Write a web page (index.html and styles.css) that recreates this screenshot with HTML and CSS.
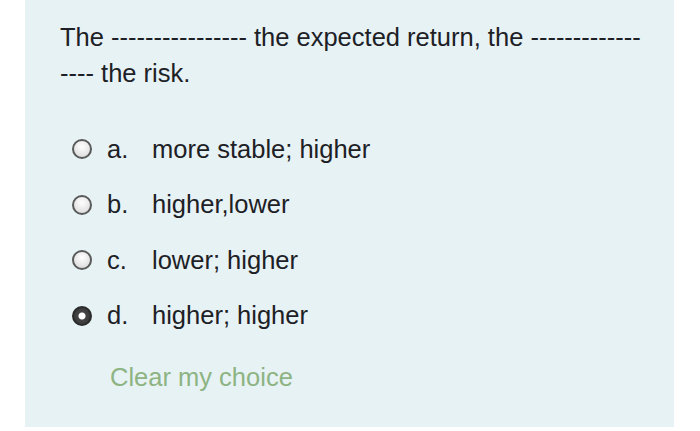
FILE: index.html
```html
<!DOCTYPE html>
<html>
<head>
<meta charset="utf-8">
<link rel="stylesheet" href="styles.css">
</head>
<body>
<div class="panel">
  <p class="question">The ---------------- the expected return, the -------------<br>---- the risk.</p>
  <div class="answers">
    <div class="opt"><span class="radio"></span><span class="letter">a.</span><span class="label">more stable; higher</span></div>
    <div class="opt"><span class="radio"></span><span class="letter">b.</span><span class="label">higher,lower</span></div>
    <div class="opt"><span class="radio"></span><span class="letter">c.</span><span class="label">lower; higher</span></div>
    <div class="opt"><span class="radio checked"></span><span class="letter">d.</span><span class="label">higher; higher</span></div>
  </div>
  <div class="clear">Clear my choice</div>
</div>
</body>
</html>
```
FILE: styles.css
```css
html, body {
  margin: 0;
  padding: 0;
  background: #ffffff;
}
body {
  font-family: "Liberation Sans", Arial, sans-serif;
  color: #1d2125;
}
.panel {
  margin-left: 25px;
  width: 649px;
  height: 427px;
  background: #e7f2f5;
  box-sizing: border-box;
  padding: 19px 20px 0 35px;
}
.question {
  margin: 0;
  font-size: 25.5px;
  line-height: 36px;
  white-space: nowrap;
}
.answers {
  margin-top: 43px;
  display: flex;
  flex-direction: column;
  gap: 25.5px;
}
.opt {
  display: flex;
  align-items: center;
  height: 30px;
  font-size: 25.5px;
  padding-left: 12px;
}
.radio {
  width: 16px;
  height: 16px;
  border: 2px solid #5a5a5a;
  border-radius: 50%;
  background: radial-gradient(circle at 50% 35%, #ffffff 0%, #e6e6e6 60%, #cfcfcf 100%);
  margin-right: 15px;
  flex: none;
  box-sizing: content-box;
}
.radio.checked {
  background: radial-gradient(circle, #ffffff 0 3px, #444 4px, #333 100%);
  border-color: #2a2a2a;
}
.letter {
  width: 45px;
}
.clear {
  margin-top: 32px;
  padding-left: 50px;
  font-size: 25.5px;
  color: #8db482;
}
```
